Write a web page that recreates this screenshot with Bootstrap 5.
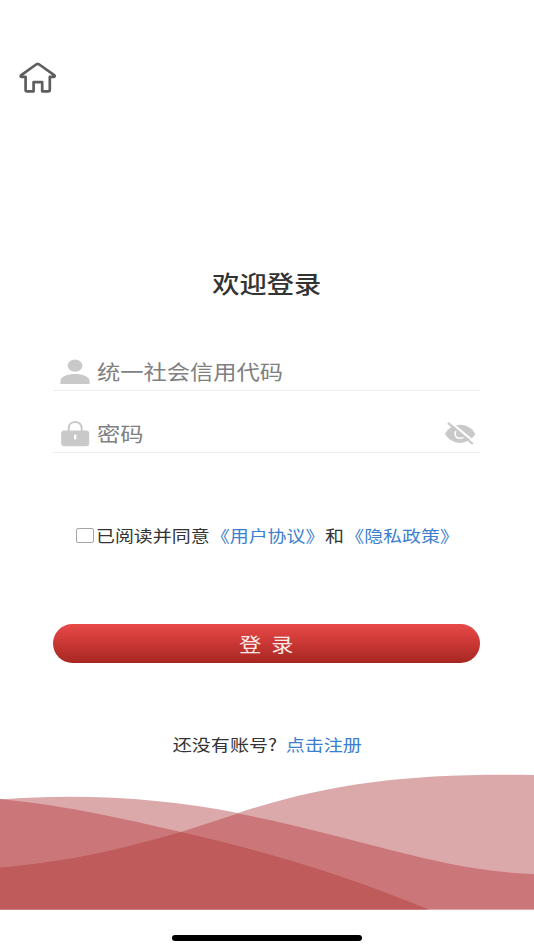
<!DOCTYPE html>
<html lang="zh-CN">
<head>
<meta charset="utf-8">
<meta name="viewport" content="width=device-width, initial-scale=1">
<title>欢迎登录</title>
<link href="https://cdn.jsdelivr.net/npm/bootstrap@5.3.0/dist/css/bootstrap.min.css" rel="stylesheet">
<style>
body{font-family:"Noto Sans CJK SC",sans-serif;color:#333;background:#fff}
.screen{height:950px}
.wide{display:inline-block;transform:scaleX(1.163);white-space:nowrap}
.wide-start{transform-origin:left center}
.top-bar{height:263px;padding:61px 0 0 18px}
.welcome{height:40px;font-size:23.4px;line-height:40px;font-weight:500}
.login-form{margin:0 54px 0 53px;padding-top:50px}
.field{height:38px;border-bottom:1px solid #ededed;padding:0 4px 0 7px}
.field + .field{margin-top:24px}
.field-label{font-size:20px;line-height:38px;color:#808080;margin-left:7px}
.agree{height:30px;margin-top:67px;padding-left:23px;font-size:16.3px;line-height:30px}
.agree .form-check-input{width:18px;height:15px;margin:0 2px 0 0;border:1px solid #a5a5a5;border-radius:2px;flex:none}
.policy{margin-left:1px;margin-right:.6px}
.link-blue{color:#3c7fd0;text-decoration:none}
.btn-login{height:39px;margin-top:74px;padding:0;border:0;font-size:19px;line-height:39px;color:#fbe9e8;background:linear-gradient(#e84a48,#c93734 50%,#a62722)}
.btn-login:hover{color:#fff}
.register{height:30px;margin-top:66px;font-size:16.4px;line-height:30px}
.home-area{padding:25px 0 9px}
.home-line{width:190px;height:6px;background:#000}
</style>
</head>
<body>
<main class="screen d-flex flex-column overflow-hidden">
  <header class="top-bar">
    <a href="#" aria-label="首页" class="d-inline-block">
      <svg class="d-block" width="40" height="34" viewBox="0 0 40 34" fill="none" stroke="#5e5e5e" stroke-width="2.7" stroke-linejoin="round"><path d="M19.7 2.8Q20.6 2.8 22 4L36.5 14.3Q37.3 15.8 35.5 15.8H31.8V29Q31.8 30.3 30.2 30.3H24.2V21.2H15.6V30.3H9.2Q7.6 30.3 7.6 29V15.8H3.9Q2.1 15.8 2.9 14.3L17.4 4Q18.8 2.8 19.7 2.8Z"/></svg>
    </a>
  </header>
  <h1 class="welcome text-center m-0"><span class="wide">欢迎登录</span></h1>
  <form class="login-form">
    <div class="field d-flex align-items-center">
      <svg width="30" height="26" viewBox="0 0 30 26" fill="#c9c9c9"><ellipse cx="15" cy="6.6" rx="7.4" ry="6.2"/><path d="M.4 25V22C.4 17.4 8 14.9 15 14.9S29.6 17.4 29.6 22V25Z"/></svg>
      <span class="field-label wide wide-start">统一社会信用代码</span>
    </div>
    <div class="field d-flex align-items-center">
      <svg width="30" height="28" viewBox="0 0 30 28"><path d="M8.7 12V8C8.7-.1 21.7-.1 21.7 8V12" fill="none" stroke="#c9c9c9" stroke-width="2"/><rect x="1.2" y="10.6" width="28" height="15.6" rx="3" fill="#c9c9c9"/><rect x="14" y="14.6" width="2.4" height="4.8" rx="1" fill="#fff"/></svg>
      <span class="field-label wide wide-start">密码</span>
      <svg class="ms-auto" width="32" height="26" viewBox="0 0 32 26"><path d="M1 12.8C7.5.8 24.5.8 31.3 12.8C24.5 25 7.5 25 1 12.8Z" fill="#c9c9c9"/><path d="M15.5 8.3C9.5 9.5 9.8 17.2 16 17.2C19.4 17.2 21.4 15.4 21.7 13M16 9.8C15.2 12 17 13.4 19.3 13" fill="none" stroke="#fff" stroke-width="1.6"/><path d="M6 .7L31 21.5" stroke="#fff" stroke-width="2.2"/><path d="M4 1.8L28.8 23" stroke="#c9c9c9" stroke-width="2.3"/></svg>
    </div>
    <div class="agree d-flex align-items-center">
      <input class="form-check-input" type="checkbox" id="agree" aria-label="同意协议">
      <span class="wide wide-start">已阅读并同意<a href="#" class="link-blue policy">《用户协议》</a>和<a href="#" class="link-blue policy">《隐私政策》</a></span>
    </div>
    <button type="button" class="btn btn-login rounded-pill w-100 d-block"><span class="wide">登&nbsp; 录</span></button>
  </form>
  <div class="register text-center"><span class="wide">还没有账号?&nbsp; <a href="#" class="link-blue">点击注册</a></span></div>
  <footer class="mt-auto">
    <svg class="d-block" width="534" height="137" viewBox="0 0 534 137">
      <path fill="#dba9aa" d="M0 26.5C80 20 164 25 238 40C330 10 410 0 534 2V136.5H0Z"/>
      <path fill="#cb777a" d="M0 26C70 33 124 46 181 59L238 40.5C360 64 440 98 534 101V136.5H0Z"/>
      <path fill="#bf5b5a" d="M0 94.5C75 88 120 76 181 59C285 83 352 105 429 136.5H0Z"/>
    </svg>
    <div class="home-area d-flex justify-content-center"><div class="home-line rounded-pill"></div></div>
  </footer>
</main>
<script src="https://cdn.jsdelivr.net/npm/bootstrap@5.3.0/dist/js/bootstrap.bundle.min.js"></script>
</body>
</html>
